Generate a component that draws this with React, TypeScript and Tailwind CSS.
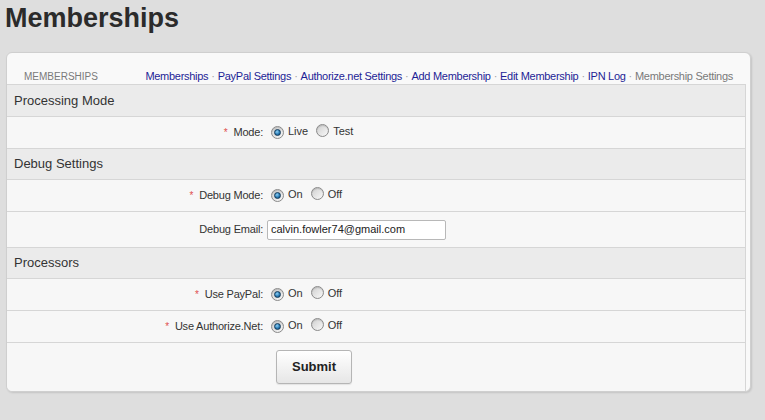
import React from "react";

const Radio = ({ checked }: { checked?: boolean }) => (
  <span className="relative inline-block w-[13px] h-[13px] shrink-0 rounded-full border border-[#8a8a8a] bg-[linear-gradient(135deg,#cfcfcf,#f9f9f9)] shadow-[inset_0_1px_1px_rgba(0,0,0,0.15)]">
    {checked && (
      <span className="absolute left-[2px] top-[2px] w-[7px] h-[7px] rounded-full border border-[#123a5a] bg-[radial-gradient(circle_at_40%_35%,#8fd0f5,#2a7cb5_55%,#0d4470)]" />
    )}
  </span>
);

const Options = ({ a, b }: { a: string; b: string }) => (
  <div className="flex items-center">
    <Radio checked />
    <span className="ml-[4px] -mt-[2px]">{a}</span>
    <span className="ml-[8px]">
      <Radio />
    </span>
    <span className="ml-[4px] -mt-[2px]">{b}</span>
  </div>
);

const Req = () => <span className="text-[#e05050] mr-[6px] text-[10px]">*</span>;

const Section = ({ title, h = "h-[31px]" }: { title: string; h?: string }) => (
  <div className={`${h} border-b border-[#d6d6d6] bg-[#ebebeb] flex items-center pl-[7px] text-[13px] text-[#333]`}>
    {title}
  </div>
);

const Row = ({
  label,
  req,
  children,
  h = "h-[32px]",
}: {
  label: string;
  req?: boolean;
  children: React.ReactNode;
  h?: string;
}) => (
  <div className={`${h} border-b border-[#d6d6d6] bg-[#f7f7f7] flex items-center text-[11px] text-[#333]`}>
    <div className="w-[264px] flex items-center justify-end pr-[8px] tracking-[-0.2px]">
      {req && <Req />}
      <span>{label}</span>
    </div>
    {children}
  </div>
);

export default function App() {
  const nav = ["Memberships", "PayPal Settings", "Authorize.net Settings", "Add Membership", "Edit Membership", "IPN Log"];
  return (
    <div
      className="w-[765px] h-[420px] bg-[#dedede] overflow-hidden"
      style={{ fontFamily: '"Liberation Sans", Arial, sans-serif' }}
    >
      <h1 className="pl-[5px] pt-[5px] text-[27px] leading-none font-bold text-[#2b2b2b]">Memberships</h1>
      <div className="ml-[6px] mt-[20px] w-[745px] h-[340px] rounded-[6px] border border-[#cfcfcf] bg-[#f9f9f9] shadow-[1px_1px_2px_rgba(0,0,0,0.12)] pr-[4px] flex flex-col">
        <div className="h-[31px] flex items-end justify-between pl-[17px] pr-[13px] pb-[1px] leading-[13px]">
          <span className="text-[10px] text-[#7a7a7a]">MEMBERSHIPS</span>
          <div className="flex items-end text-[11px] tracking-[-0.28px]">
            {nav.map((n) => (
              <React.Fragment key={n}>
                <span className="text-[#1e1e96]">{n}</span>
                <span className="text-[#a0a0a0] mx-[3px]">·</span>
              </React.Fragment>
            ))}
            <span className="text-[#7a7a7a]">Membership Settings</span>
          </div>
        </div>
        <div className="border-t border-r border-[#d6d6d6] flex-1 flex flex-col">
          <Section title="Processing Mode" h="h-[32px]" />
          <Row label="Mode:" req>
            <Options a="Live" b="Test" />
          </Row>
          <Section title="Debug Settings" />
          <Row label="Debug Mode:" req>
            <Options a="On" b="Off" />
          </Row>
          <Row label="Debug Email:" h="h-[36px]">
            <div className="-ml-[4px] w-[179px] h-[20px] border border-[#b8b8b8] rounded-[2px] bg-white flex items-center pl-[3px] text-[11px] text-[#222]">
              calvin.fowler74@gmail.com
            </div>
          </Row>
          <Section title="Processors" />
          <Row label="Use PayPal:" req>
            <Options a="On" b="Off" />
          </Row>
          <Row label="Use Authorize.Net:" req>
            <Options a="On" b="Off" />
          </Row>
          <div className="flex-1 bg-[#f7f7f7] rounded-bl-[6px] flex items-center pl-[269px] pb-[1px]">
            <button className="w-[76px] h-[34px] rounded-[3px] border border-[#b5b5b5] bg-[linear-gradient(#ffffff,#e6e6e6)] text-[13px] font-bold text-[#222] shadow-[0_1px_1px_rgba(0,0,0,0.08)]">
              Submit
            </button>
          </div>
        </div>
      </div>
    </div>
  );
}
